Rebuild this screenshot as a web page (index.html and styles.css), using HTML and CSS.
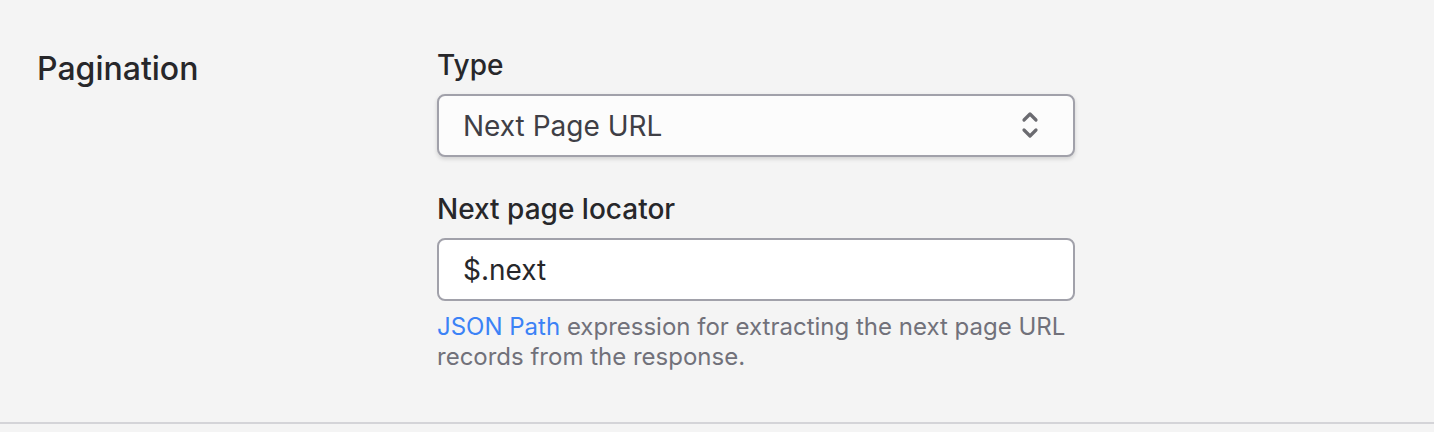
FILE: index.html
```html
<!DOCTYPE html>
<html lang="en">
<head>
    <meta charset="UTF-8">
    <meta name="viewport" content="width=device-width, initial-scale=1.0">
    <title>Pagination</title>
    <link rel="stylesheet" href="styles.css">
</head>
<body>

<section class="settings-row">
    <h3 class="section-title">Pagination</h3>

    <div class="fields">
        <!-- Type -->
        <div class="form-group">
            <label for="type">Type</label>
            <div class="select-wrap">
                <select id="type" name="type">
                    <option value="next_page_url">Next Page URL</option>
                    <option value="offset">Offset</option>
                    <option value="cursor">Cursor</option>
                </select>
                <svg class="select-icon" width="22" height="32" viewBox="0 0 22 32" fill="none">
                    <path d="M5 11 L11 5 L17 11" stroke="#6b6b70" stroke-width="3.2" stroke-linecap="round" stroke-linejoin="round"/>
                    <path d="M5 21 L11 27 L17 21" stroke="#6b6b70" stroke-width="3.2" stroke-linecap="round" stroke-linejoin="round"/>
                </svg>
            </div>
        </div>

        <!-- Next page locator -->
        <div class="form-group">
            <label for="locator">Next page locator</label>
            <input type="text" id="locator" name="locator" value="$.next">
            <p class="help"><a href="#">JSON Path</a> expression for extracting the next page URL records from the response.</p>
        </div>
    </div>
</section>

</body>
</html>
```

FILE: styles.css
```css
body {
    font-family: Inter, "Noto Sans", sans-serif;
    background: #f4f4f4;
    margin: 0;
    color: #27272a;
}
.settings-row {
    display: flex;
    padding: 45px 37px 50px;
    border-bottom: 2px solid #d4d4d8;
}
.section-title {
    width: 400px;
    margin: 0;
    font-size: 32px;
    font-weight: 500;
    line-height: 48px;
    color: #27272a;
}
.fields {
    width: 638px;
}
.form-group {
    margin-bottom: 32px;
}
.form-group:last-child {
    margin-bottom: 0;
}
label {
    display: block;
    font-size: 28px;
    font-weight: 500;
    line-height: 40px;
    margin-bottom: 9px;
    color: #27272a;
}
.select-wrap {
    position: relative;
}
select, input[type="text"] {
    display: block;
    box-sizing: border-box;
    width: 100%;
    height: 63px;
    padding: 0 24px;
    font-family: inherit;
    font-size: 28px;
    color: #3f3f46;
    border: 2px solid #a1a1aa;
    border-radius: 8px;
    outline: none;
}
select {
    appearance: none;
    -webkit-appearance: none;
    background: #fcfcfc;
    box-shadow: 0 2px 4px rgba(0, 0, 0, 0.15);
}
input[type="text"] {
    background: #ffffff;
    color: #27272a;
}
.select-icon {
    position: absolute;
    right: 34px;
    top: 15px;
    pointer-events: none;
}
.help {
    margin: 11px 0 0;
    font-size: 24px;
    line-height: 30px;
    color: #71717a;
}
.help a {
    color: #3b82f6;
    text-decoration: none;
}
```
